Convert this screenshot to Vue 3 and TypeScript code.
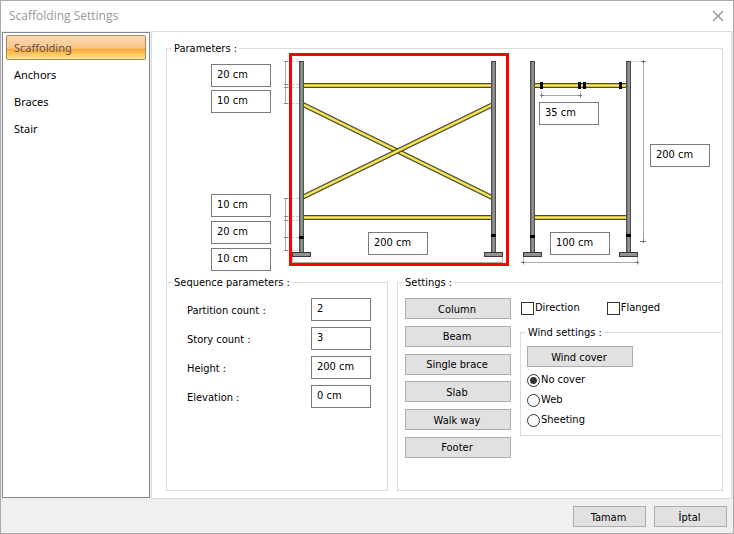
<script setup lang="ts">
import { reactive, ref } from 'vue'

const pages = ['Scaffolding', 'Anchors', 'Braces', 'Stair']
const activePage = ref('Scaffolding')

const dims = reactive({
  topOffset: '20 cm',
  braceTop: '10 cm',
  braceBottom: '10 cm',
  lowerBeam: '20 cm',
  footOffset: '10 cm',
  bay: '200 cm',
  hook: '35 cm',
  depth: '100 cm',
  height: '200 cm',
})

const sequence = reactive([
  { id: 'partitions', label: 'Partition count :', value: '2' },
  { id: 'stories', label: 'Story count :', value: '3' },
  { id: 'height', label: 'Height :', value: '200 cm' },
  { id: 'elevation', label: 'Elevation :', value: '0 cm' },
])

const parts = ['Column', 'Beam', 'Single brace', 'Slab', 'Walk way', 'Footer']
const covers = ['No cover', 'Web', 'Sheeting']
const cover = ref('No cover')
const direction = ref(false)
const flanged = ref(false)

const posts = [
  { x: 299, foot: 292, band: 236 },
  { x: 491, foot: 484, band: 234 },
  { x: 530, foot: 523, band: 235 },
  { x: 626, foot: 619, band: 234 },
]
const beams = [
  { x: 303, y: 83, w: 189 },
  { x: 303, y: 215, w: 189 },
  { x: 534, y: 83, w: 93 },
  { x: 534, y: 215, w: 93 },
]
const braces = ['M303 104.500 492 197.500', 'M303 197 492 105']
const clamps = [540, 578, 583, 619]
const leftTicks = [61, 84, 87, 103, 198, 216, 220, 237, 250]
</script>

<template>
  <div class="dialog">
    <header class="titlebar">
      <span class="title">Scaffolding Settings</span>
      <button class="close" type="button" aria-label="Close">
        <svg width="12" height="12" viewBox="0 0 12 12"><path d="M1 1 11 11M11 1 1 11" fill="none" stroke="#8c8c8c" stroke-width="1.1" /></svg>
      </button>
    </header>

    <div class="content">
      <nav class="pages">
        <button
          v-for="page in pages"
          :key="page"
          type="button"
          class="page"
          :class="{ active: page === activePage }"
          @click="activePage = page"
        >{{ page }}</button>
      </nav>

      <main class="panel">
        <fieldset class="group params">
          <legend>Parameters :</legend>
          <div class="params-body">
            <div class="offsets">
              <div class="stack">
                <input v-model="dims.topOffset" class="field" aria-label="Top offset" />
                <input v-model="dims.braceTop" class="field" aria-label="Upper brace offset" />
              </div>
              <div class="stack lower">
                <input v-model="dims.braceBottom" class="field" aria-label="Lower brace offset" />
                <input v-model="dims.lowerBeam" class="field" aria-label="Lower beam offset" />
                <input v-model="dims.footOffset" class="field" aria-label="Foot offset" />
              </div>
            </div>
            <div class="canvas">
              <svg class="drawing" width="400" height="220" viewBox="271 55 400 220">
                <defs>
                  <linearGradient id="steel" x1="0" x2="1" y1="0" y2="0">
                    <stop offset="0" stop-color="#3c3c3c" />
                    <stop offset="0.3" stop-color="#777" />
                    <stop offset="0.6" stop-color="#a2a4a6" />
                    <stop offset="1" stop-color="#333" />
                  </linearGradient>
                </defs>
                <g stroke="#a9a9a9" fill="none">
                  <path d="M285.500 61V104M285.500 198V251M643.500 61V242" />
                  <path d="M542 95.500H581M292 262.500H503M523 262.500H638" />
                  <path d="M292.500 257V265M502.500 257V265M523.500 257V265M637.500 257V265" stroke="#c4c4c4" />
                  <path d="M541.500 91V98M580.500 91V98" stroke="#c4c4c4" />
                </g>
                <g fill="none">
                  <path
                    v-for="y in leftTicks"
                    :key="y"
                    :d="`M288 ${y + 0.5}H299`"
                    stroke="#d2d2d2"
                    stroke-dasharray="3 1"
                  />
                  <path v-for="y in leftTicks" :key="`m${y}`" :d="`M284 ${y + 0.5}H288`" stroke="#888" />
                  <path d="M631 61.500H642" stroke="#d2d2d2" stroke-dasharray="3 1" />
                  <path d="M641 61.500H646M640 241.500H646M540 95.500H544M578 95.500H582M521 262.500H525M635 262.500H639" stroke="#777" />
                  <path d="M643.500 60V64M643.500 239V243M541.500 94V97M580.500 94V97M523.500 261V264M637.500 261V264" stroke="#777" />
                </g>
                <g v-for="brace in braces" :key="brace" fill="none">
                  <path :d="brace" stroke="#46443a" stroke-width="4.800" />
                  <path :d="brace" stroke="#e5d23e" stroke-width="2.800" />
                  <path :d="brace" stroke="#fff06a" stroke-width="1" />
                </g>
                <g v-for="beam in beams" :key="`${beam.x}-${beam.y}`">
                  <rect :x="beam.x" :y="beam.y" :width="beam.w" height="5" fill="#4c4a40" />
                  <rect :x="beam.x" :y="beam.y + 1" :width="beam.w" height="3" fill="#cfbc38" />
                  <rect :x="beam.x" :y="beam.y + 2" :width="beam.w" height="1" fill="#ffef62" />
                </g>
                <rect v-for="x in clamps" :key="x" :x="x" y="82" width="3" height="7" fill="#000" />
                <g v-for="post in posts" :key="post.x">
                  <rect :x="post.x" y="61" width="5" height="191" fill="url(#steel)" />
                  <rect :x="post.x" y="61" width="5" height="1" fill="#444" />
                  <rect :x="post.x" :y="post.band" width="5" height="3" fill="#000" />
                  <rect :x="post.foot + 0.5" y="252.500" width="18" height="4" fill="#929292" stroke="#383838" />
                </g>
                <rect x="290.500" y="54.500" width="217" height="210" fill="none" stroke="#f00" stroke-width="3" />
              </svg>
              <input v-model="dims.bay" class="field over bay" aria-label="Bay width" />
              <input v-model="dims.hook" class="field over hook" aria-label="Hook distance" />
              <input v-model="dims.depth" class="field over depth" aria-label="Depth" />
              <input v-model="dims.height" class="field over tall" aria-label="Story height" />
            </div>
          </div>
        </fieldset>

        <div class="lower-row">
          <fieldset class="group sequence">
            <legend>Sequence parameters :</legend>
            <div class="rows">
              <div v-for="row in sequence" :key="row.id" class="row">
                <label :for="row.id">{{ row.label }}</label>
                <input :id="row.id" v-model="row.value" class="field" />
              </div>
            </div>
          </fieldset>

          <fieldset class="group settings">
            <legend>Settings :</legend>
            <div class="settings-body">
              <div class="parts">
                <button v-for="part in parts" :key="part" type="button" class="btn">{{ part }}</button>
              </div>
              <div class="options">
                <div class="checks">
                  <label class="choice"><input v-model="direction" type="checkbox" />Direction</label>
                  <label class="choice"><input v-model="flanged" type="checkbox" />Flanged</label>
                </div>
                <fieldset class="group wind">
                  <legend>Wind settings :</legend>
                  <div class="wind-body">
                    <button type="button" class="btn">Wind cover</button>
                    <div class="radios">
                      <label v-for="option in covers" :key="option" class="choice">
                        <input v-model="cover" type="radio" name="cover" :value="option" />{{ option }}
                      </label>
                    </div>
                  </div>
                </fieldset>
              </div>
            </div>
          </fieldset>
        </div>
      </main>
    </div>

    <footer class="actions">
      <button type="button" class="btn small">Tamam</button>
      <button type="button" class="btn small">İptal</button>
    </footer>
  </div>
</template>

<style>
body {
  margin: 0;
  background: #f0f0f0;
}
</style>

<style scoped>
.dialog {
  box-sizing: border-box;
  min-height: 100vh;
  display: flex;
  flex-direction: column;
  border: 1px solid #aaa;
  background: #f0f0f0;
  color: #000;
  font-family: "DejaVu Sans Condensed", "Noto Sans", sans-serif;
  font-size: 11px;
  line-height: 14px;
}
.dialog *,
.dialog *::before {
  box-sizing: border-box;
}
button,
input {
  font: inherit;
  color: inherit;
  margin: 0;
}
.titlebar {
  height: 30px;
  display: flex;
  align-items: center;
  justify-content: space-between;
  padding: 0 8px;
  background: #fff;
}
.title {
  font-family: "Open Sans", "Noto Sans", sans-serif;
  font-size: 12px;
  color: #999;
}
.close {
  display: flex;
  padding: 1px;
  border: 0;
  background: none;
}
.content {
  flex: 1;
  display: flex;
  gap: 1px;
  padding: 0 1px 0 1px;
}
.pages {
  width: 148px;
  display: flex;
  flex-direction: column;
  gap: 2px;
  margin: 1px 0;
  padding: 2px 3px;
  border: 1px solid #828790;
  background: #fff;
  font-family: "Noto Sans", sans-serif;
}
.page {
  height: 25px;
  padding: 1px 7px 0;
  border: 1px solid transparent;
  border-radius: 2px;
  background: none;
  text-align: left;
}
.page.active {
  border-color: #a58a58;
  color: #555;
  background: linear-gradient(#fbdcb8 0%, #fac384 54%, #f7a537 56%, #fcc95d 80%, #ffe394 100%);
}
.panel {
  flex: 1;
  display: flex;
  flex-direction: column;
  padding: 9px 8px 7px 14px;
  border: 1px solid #dcdcdc;
  background: #fff;
}
.group {
  min-width: 0;
  margin: 0;
  padding: 0;
  border: 1px solid #dcdcdc;
}
legend {
  margin-left: 5px;
  padding: 1px 2px 0;
}
legend + div {
  margin-top: -1px;
}
.params {
  margin-bottom: -7px;
  padding-bottom: 7px;
  border-bottom: 0;
}
.params-body {
  display: flex;
  height: 220px;
}
.offsets {
  display: flex;
  flex-direction: column;
  justify-content: space-between;
  padding: 9px 0 4px 44px;
}
.stack {
  display: flex;
  flex-direction: column;
  gap: 3px;
}
.stack.lower {
  gap: 4px;
}
.field {
  width: 60px;
  height: 23px;
  padding: 0 5px 2px;
  border: 1px solid #7a7a7a;
  border-radius: 0;
  background: #fff;
}
.canvas {
  position: relative;
  flex: 1;
}
.drawing {
  display: block;
  overflow: visible;
}
.over {
  position: absolute;
}
.bay {
  left: 97px;
  top: 177px;
}
.hook {
  left: 268px;
  top: 47px;
}
.depth {
  left: 279px;
  top: 177px;
}
.tall {
  left: 379px;
  top: 89px;
}
.lower-row {
  flex: 1;
  display: flex;
  gap: 9px;
}
.sequence {
  width: 222px;
}
.rows {
  display: flex;
  flex-direction: column;
  gap: 6px;
  padding: 9px 16px 0 20px;
}
.row {
  display: flex;
  align-items: center;
  justify-content: space-between;
}
.row label {
  padding-top: 2px;
}
.settings {
  flex: 1;
}
.settings-body {
  display: flex;
  gap: 9px;
  padding: 9px 0 0 7px;
}
.parts {
  height: 160px;
  display: flex;
  flex-direction: column;
  justify-content: space-between;
}
.btn {
  width: 106px;
  height: 21px;
  padding: 2px 2px 0 0;
  border: 1px solid #adadad;
  background: #e1e1e1;
}
.small {
  width: 73px;
}
.options {
  flex: 1;
}
.checks {
  display: flex;
  gap: 27px;
  padding: 3px 0 0 1px;
}
.choice {
  display: flex;
  align-items: center;
  gap: 1px;
}
.choice input {
  appearance: none;
  width: 13px;
  height: 13px;
  border: 1px solid #333;
  background: #fff;
}
.choice input[type="radio"] {
  border-radius: 50%;
}
.choice input[type="radio"]:checked {
  background: radial-gradient(circle, #333 3px, #fff 4px);
}
.choice input[type="checkbox"]:checked {
  background: #333;
}
.wind {
  margin-top: 10px;
  border-right: 0;
}
.wind-body {
  padding: 7px 6px 8px;
}
.radios {
  display: flex;
  flex-direction: column;
  gap: 6px;
  padding-top: 6px;
}
.actions {
  display: flex;
  justify-content: flex-end;
  gap: 8px;
  padding: 7px 6px 6px;
}
</style>
